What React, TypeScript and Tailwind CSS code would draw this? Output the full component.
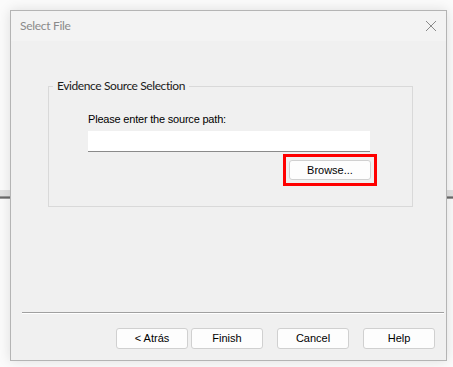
const btn =
  'h-[21px] w-[72px] rounded-[3px] border border-[#d0d0d0] bg-[#fdfdfd] text-[11px] text-black flex items-center justify-center';

export default function App() {
  return (
    <div className="relative h-[367px] w-[453px] overflow-hidden bg-[#fbfbfb] pl-[10px] pt-[10px] font-['Liberation_Sans',Arial,sans-serif]">
      {/* window behind the dialog */}
      <div className="absolute left-0 right-0 top-[190px] h-[6px] bg-[#e2e2e2]" />
      <div className="absolute left-0 right-0 top-[196px] h-[3px] border-y border-[#9a9a9a] bg-[#6a6a6a]" />

      <div className="relative flex h-[351px] w-[437px] flex-col border border-[#b4b4b4] bg-[#f0f0f0] shadow-[0_0_12px_rgba(0,0,0,0.12)]">
        <div className="flex h-[30px] items-center justify-between bg-[#f3f3f3] pl-[9px] pr-[10px]">
          <span className="font-['Lato',sans-serif] text-[12px] tracking-[-0.3px] text-[#8a8a8a]">Select File</span>
          <svg width="12" height="12" viewBox="0 0 12 12" className="mr-[-1px]">
            <path d="M1 1L11 11M11 1L1 11" stroke="#8a8a8a" strokeWidth="1" />
          </svg>
        </div>

        <div className="flex flex-1 flex-col">
          <fieldset className="ml-[37px] mt-[36px] h-[130px] w-[365px] border border-[#d9d9d9] px-0">
            <legend className="ml-[4px] px-[4px] font-['Lato',sans-serif] text-[12px] tracking-[-0.4px] text-[#1a1a1a]">
              Evidence Source Selection
            </legend>
            <div className="ml-[39px] mt-[17px] flex w-[282px] flex-col">
              <span className="text-[11px] leading-[14px] tracking-[-0.2px] text-black">Please enter the source path:</span>
              <div className="mt-[5px] h-[21px] w-[282px] border-b border-[#8a8a8a] bg-white" />
              <div className="mt-[2px] flex justify-end">
                <div className="mr-[-7px] border-[3px] border-[#ff0000] p-[3px]">
                  <div className="h-[20px] w-[82px] rounded-[3px] border border-[#d0d0d0] bg-[#fdfdfd] text-[11px] text-black flex items-center justify-center">
                    Browse...
                  </div>
                </div>
              </div>
            </div>
          </fieldset>

          <div className="ml-[11px] mt-[105px] h-[2px] w-[422px] border-b border-white bg-[#a0a0a0]" />

          <div className="ml-[105px] mt-[14px] flex">
            <div className={btn}>&lt; Atrás</div>
            <div className={`${btn} ml-[3px]`}>Finish</div>
            <div className={`${btn} ml-[14px]`}>Cancel</div>
            <div className={`${btn} ml-[14px]`}>Help</div>
          </div>
        </div>
      </div>
    </div>
  );
}
